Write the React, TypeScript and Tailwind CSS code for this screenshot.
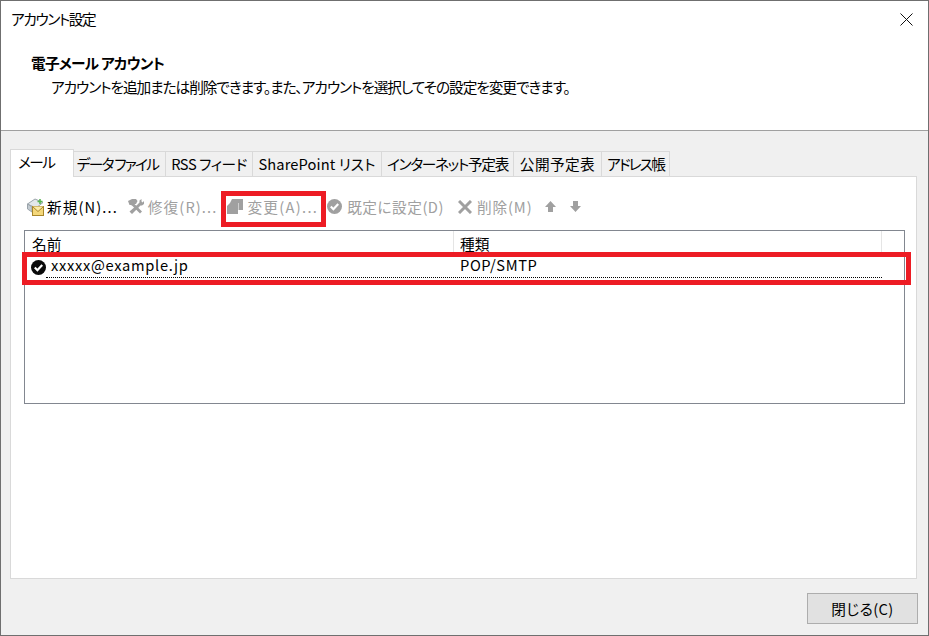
import React from 'react';

const palt = "[font-feature-settings:'palt'] [font-family:'Noto_Sans_CJK_JP','Noto_Sans',sans-serif]";

const NewIcon = () => (
    <svg width="17" height="18" viewBox="0 0 17 18" className="shrink-0">
        <path d="M0.5 6 L8 1 L16 4.5 L9 10 Z" fill="#e3e7ea" stroke="#9aa3aa" />
        <path d="M0.5 6 V11 L5 14 V9 Z" fill="#c3cbd1" stroke="#9aa3aa" />
        <rect x="5.5" y="8.5" width="11" height="9" fill="#f4d77a" stroke="#a8862a" />
        <path d="M5.5 8.5 L11 13.5 L16.5 8.5" fill="#fbeaa8" stroke="#a8862a" />
        <path d="M13 1 V6 M10.5 3.5 H15.5" stroke="#58b552" strokeWidth="1.6" />
    </svg>
);

const ToolsIcon = () => (
    <svg width="16" height="15" viewBox="0 0 16 15" className="shrink-0">
        <path d="M0 2 L4 0 H8 L9.5 2 L8 5 L6.5 5 L14 12.5 L12 14.5 L4.5 7 L3 6 L1.5 6 Z" fill="#a0a0a0" />
        <path d="M9 6 L11.5 3.5 L11.5 1.5 L13.5 0 L13.5 2.5 L14.5 3.5 L16 2 L16 5 L14 6.5 L12.5 6.5 L4 15 L1.5 12.5 Z" fill="#a0a0a0" />
    </svg>
);

const ChangeIcon = () => (
    <svg width="16" height="15" viewBox="0 0 16 15" className="shrink-0">
        <path d="M5 0 H16 V11 H11.5 V4 H3 Z" fill="#a0a0a0" />
        <path d="M0 7 L3 4 H11 V15 H0 Z" fill="#a0a0a0" />
    </svg>
);

const CheckIcon = ({ color }: { color: string }) => (
    <svg width="15" height="15" viewBox="0 0 15 15" className="shrink-0">
        <circle cx="7.5" cy="7.5" r="7.5" fill={color} />
        <path d="M3.8 7.5 L6.4 10.2 L11.2 5" fill="none" stroke="#ffffff" strokeWidth="2.2" />
    </svg>
);

const CrossIcon = () => (
    <svg width="14" height="14" viewBox="0 0 14 14" className="shrink-0">
        <path d="M1 1 L13 13 M13 1 L1 13" stroke="#a0a0a0" strokeWidth="3" />
    </svg>
);

const ArrowIcon = ({ down }: { down?: boolean }) => (
    <svg width="11" height="11" viewBox="0 0 11 11" className="shrink-0">
        <path d={down ? 'M3 0 H8 V5 H11 L5.5 11 L0 5 H3 Z' : 'M5.5 0 L11 6 H8 V11 H3 V6 H0 Z'} fill="#a0a0a0" />
    </svg>
);

const tabs = [
    { label: 'データ ファイル', cls: 'w-[92px] pr-[4px] tracking-[-1.7px]' },
    { label: 'RSS フィード', cls: 'w-[87px] tracking-[-0.4px]' },
    { label: 'SharePoint リスト', cls: 'w-[129px] tracking-[0.1px]' },
    { label: 'インターネット予定表', cls: 'w-[132px] tracking-[-1.3px]' },
    { label: '公開予定表', cls: 'w-[88px] tracking-[0.4px]' },
    { label: 'アドレス帳', cls: 'w-[68px] tracking-[-1.8px]' },
];

const App: React.FC = () => {
    return (
        <div className={`relative flex flex-col w-[929px] h-[636px] overflow-hidden bg-[#f0f0f0] border border-[#6f6f6f] text-[14.67px] text-black ${palt}`}>
            <header className="flex flex-col h-[130px] shrink-0 bg-white border-b border-[#a0a0a0]">
                <div className="flex items-center justify-between h-[36px] pl-[10px] pr-[15px]">
                    <span className="leading-none tracking-[-1.4px]">アカウント設定</span>
                    <svg width="13" height="13" viewBox="0 0 13 13">
                        <path d="M0.5 0.5 L12.5 12.5 M12.5 0.5 L0.5 12.5" stroke="#111" strokeWidth="1" fill="none" />
                    </svg>
                </div>
                <h1 className="mt-[16px] ml-[30px] font-bold leading-[20px] tracking-[-0.7px]">電子メール アカウント</h1>
                <p className="mt-[4px] ml-[50px] leading-[20px] tracking-[-1.05px]">アカウントを追加または削除できます。また、アカウントを選択してその設定を変更できます。</p>
            </header>

            <main className="flex flex-col flex-1 pl-[9px] pr-[10px] pt-[18px]">
                <div className="flex items-end h-[27px] shrink-0">
                    <div className="relative z-10 flex items-center w-[64px] h-[28px] pl-[7px] pb-[3px] -mb-px bg-white border border-b-0 border-[#d9d9d9] tracking-[-1.5px]">メール</div>
                    {tabs.map((t) => (
                        <div key={t.label} className={`flex items-center justify-center ${t.cls} h-[25px] bg-[#f0f0f0] border border-l-0 border-b-0 border-[#d9d9d9] whitespace-nowrap`}>
                            {t.label}
                        </div>
                    ))}
                </div>
                <section className="flex flex-col w-[907px] h-[403px] bg-white border border-[#d9d9d9] pl-[13px] pr-[11px]">
                    <div className="flex items-center h-[53px] pt-[6px] pl-[3px] text-[#a0a0a0] whitespace-nowrap">
                        <NewIcon />
                        <span className="ml-[3px] text-black tracking-[1.1px]">新規(N)...</span>
                        <span className="ml-[10px]"><ToolsIcon /></span>
                        <span className="ml-[4px] tracking-[1.1px]">修復(R)...</span>
                        <span className="ml-[10px]"><ChangeIcon /></span>
                        <span className="ml-[4px] tracking-[1.3px]">変更(A)...</span>
                        <span className="ml-[9px]"><CheckIcon color="#a0a0a0" /></span>
                        <span className="ml-[5px] tracking-[0.5px]">既定に設定(D)</span>
                        <span className="ml-[14px]"><CrossIcon /></span>
                        <span className="ml-[5px] tracking-[0.9px]">削除(M)</span>
                        <span className="ml-[12px]"><ArrowIcon /></span>
                        <span className="ml-[14px]"><ArrowIcon down /></span>
                    </div>
                    <div className="h-[174px] border border-[#828790] bg-white">
                        <div className="flex h-[25px] leading-[26px]">
                            <div className="w-[429px] pl-[7px] border-r border-[#e5e5e5]">名前</div>
                            <div className="w-[428px] pl-[6px] border-r border-[#e5e5e5]">種類</div>
                        </div>
                        <div className="flex items-center w-[857px] h-[22px] pl-[6px]">
                            <CheckIcon color="#0a0a0a" />
                            <div className="flex flex-1 items-center h-full pl-[5px] pb-[3px] border-b border-dotted border-black">
                                <span className="w-[409px] tracking-[0.7px]">xxxxx@example.jp</span>
                                <span className="tracking-[0.6px]">POP/SMTP</span>
                            </div>
                        </div>
                    </div>
                </section>
                <footer className="flex justify-end pt-[14px]">
                    <button className="w-[111px] h-[31px] bg-[#e1e1e1] border border-[#adadad] text-center tracking-[0.4px]">閉じる(C)</button>
                </footer>
            </main>

            <div className="absolute left-[220px] top-[190px] w-[105px] h-[36px] border-[5px] border-[#ed1c24]" />
            <div className="absolute left-[21px] top-[251px] w-[889px] h-[33px] border-[5px] border-[#ed1c24]" />
        </div>
    );
};

export default App;
